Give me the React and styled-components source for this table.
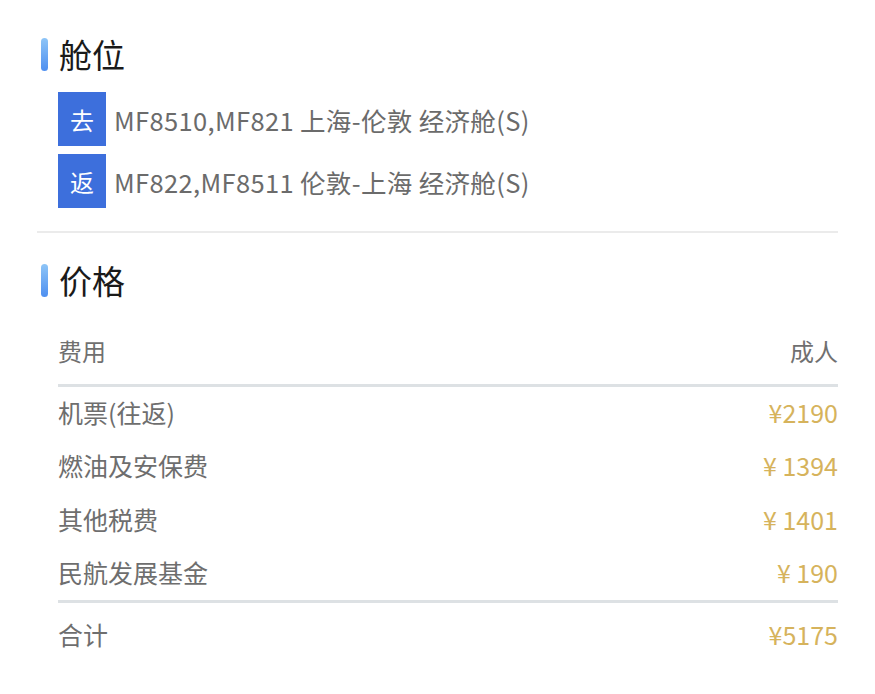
import styled, { createGlobalStyle } from "styled-components";

const Global = createGlobalStyle`
    body {
        margin: 0;
        background: #ffffff;
        font-family: "Noto Sans CJK SC", "Noto Sans", sans-serif;
    }
`;

const cabins = [
    { tag: "去", text: "MF8510,MF821 上海-伦敦 经济舱(S)" },
    { tag: "返", text: "MF822,MF8511 伦敦-上海 经济舱(S)" },
];

const fees = [
    { name: "机票(往返)", price: "¥2190" },
    { name: "燃油及安保费", price: "¥ 1394" },
    { name: "其他税费", price: "¥ 1401" },
    { name: "民航发展基金", price: "¥ 190" },
];

export default function App() {
    return (
        <Page>
            <Global />
            <Section>
                <Title>舱位</Title>
                <CabinList>
                    {cabins.map((c) => (
                        <CabinRow key={c.tag}>
                            <Badge>{c.tag}</Badge>
                            <CabinText>{c.text}</CabinText>
                        </CabinRow>
                    ))}
                </CabinList>
            </Section>
            <Divider />
            <Section>
                <Title>价格</Title>
                <Table>
                    <HeadRow>
                        <span>费用</span>
                        <span>成人</span>
                    </HeadRow>
                    <Body>
                        {fees.map((f) => (
                            <FeeRow key={f.name}>
                                <Label>{f.name}</Label>
                                <Price>{f.price}</Price>
                            </FeeRow>
                        ))}
                    </Body>
                    <TotalRow>
                        <Label>合计</Label>
                        <Price>¥5175</Price>
                    </TotalRow>
                </Table>
            </Section>
        </Page>
    );
}

const Page = styled.div`
    width: 801px;
    padding: 33px 0 0 37px;
`;

const Section = styled.section`
    display: flex;
    flex-direction: column;
`;

const Title = styled.h2`
    display: flex;
    align-items: center;
    gap: 11px;
    margin: 0 0 0 4px;
    height: 42px;
    font-size: 33px;
    font-weight: 400;
    color: #1a1a1a;

    &::before {
        content: "";
        width: 7px;
        height: 33px;
        border-radius: 4px;
        background: linear-gradient(180deg, #8ec5f7 0%, #4e8ff0 100%);
    }
`;

const CabinList = styled.div`
    display: flex;
    flex-direction: column;
    gap: 8px;
    padding: 17px 0 23px 21px;
`;

const CabinRow = styled.div`
    display: flex;
    align-items: center;
    gap: 8px;
`;

const Badge = styled.div`
    width: 48px;
    height: 54px;
    display: flex;
    align-items: center;
    justify-content: center;
    background: #3d6fdc;
    color: #ffffff;
    font-size: 24px;
`;

const CabinText = styled.span`
    font-size: 25.5px;
    letter-spacing: 0.35px;
    color: #6b6b6b;
`;

const Divider = styled.hr`
    margin: 0 0 26px;
    border: none;
    border-top: 2px solid #ebebeb;
`;

const Table = styled.div`
    display: flex;
    flex-direction: column;
    margin: 22px 0 0 21px;
`;

const HeadRow = styled.div`
    display: flex;
    justify-content: space-between;
    align-items: center;
    height: 54px;
    padding-bottom: 7px;
    border-bottom: 3px solid #dde1e4;
    font-size: 24px;
    color: #707070;
`;

const Body = styled.div`
    display: flex;
    flex-direction: column;
    margin-top: -2px;
    padding-bottom: 1px;
    border-bottom: 3px solid #dde1e4;
`;

const FeeRow = styled.div`
    display: flex;
    justify-content: space-between;
    align-items: center;
    height: 53.5px;
`;

const TotalRow = styled(FeeRow)`
    height: 62px;
`;

const Label = styled.span`
    font-size: 25px;
    color: #6e6e6e;
`;

const Price = styled.span`
    font-size: 25px;
    color: #d6b35c;
`;
